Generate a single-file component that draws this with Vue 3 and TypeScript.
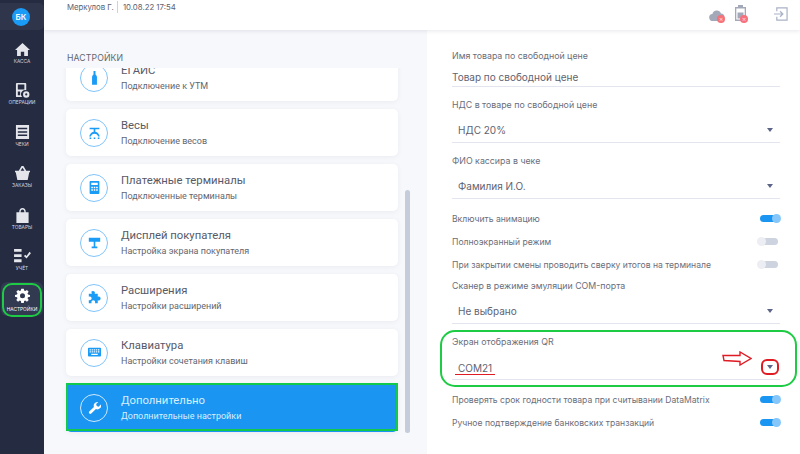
<script setup lang="ts">
interface NavItem { label: string; icon: string }
const nav: NavItem[] = [
  { label: 'КАССА', icon: 'M9 1 1 8.500h2.200V15h4v-4.500h3.600V15h4V8.500H17z' },
  { label: 'ОПЕРАЦИИ', icon: 'M3 0h9a1 1 0 0 1 1 1v6.600A4.500 4.500 0 0 0 8.600 15H3a1 1 0 0 1-1-1V1a1 1 0 0 1 1-1zm1 1.500v5.500h7V1.500zM4 9v4h2.500V9zM13 8.800a3.400 3.400 0 1 0 0 6.800 3.400 3.400 0 0 0 0-6.800zm0 2.200a1.200 1.200 0 1 1 0 2.400 1.200 1.200 0 0 1 0-2.400z' },
  { label: 'ЧЕКИ', icon: 'M2 0h14v15H2zm2 3v1.600h10V3zm0 3.600v1.600h10V6.600zm0 3.600v1.600h10v-1.600z' },
  { label: 'ЗАКАЗЫ', icon: 'M1 5h16v1.600h-.8L14.500 15h-11L1.800 6.600H1zM5 5l3-5h2l3 5h-2L9 1.800 7 5z' },
  { label: 'ТОВАРЫ', icon: 'M2.500 4.500h13V16h-13zM5.500 4.500C5.500 1.500 7 0 9 0s3.500 1.500 3.500 4.500H11C11 2.500 10.200 1.500 9 1.500S7 2.500 7 4.500z' },
  { label: 'УЧЁТ', icon: 'M0 0h8v3H0zm0 5.500h8v3H0zM0 11h8v3H0zm10.500-3.500 1.500-1.500 1.300 1.400L16.500 3 18 4.500 13.300 10z' },
]
const cards = [
  { t: 'ЕГАИС', s: 'Подключение к УТМ', i: 'M6.800 1h2.400v4c0 1 1.800 1.500 1.800 3.500V18H5V8.500C5 6.500 6.800 6 6.800 5z' },
  { t: 'Весы', s: 'Подключение весов', i: 'M2 3h12v2H2zm5 2h2v3c3 .5 5 3 5.500 6h-2C12 12 10.500 10.500 8 10.500S4 12 3.500 14h-2C2 11 4 8.500 7 8zM2 15h2v2H2zm5 0h2v2H7zm5 0h2v2h-2z' },
  { t: 'Платежные терминалы', s: 'Подключенные терминалы', i: 'M3 1h10a1 1 0 0 1 1 1v14a1 1 0 0 1-1 1H3a1 1 0 0 1-1-1V2a1 1 0 0 1 1-1zm1 2v3h8V3zm0 5v2h2V8zm3 0v2h2V8zm3 0v2h2V8zm-6 3v2h2v-2zm3 0v2h2v-2zm3 0v2h2v-2z' },
  { t: 'Дисплей покупателя', s: 'Настройка экрана покупателя', i: 'M1 3h14v5H1zm6 5h2v6h2.500v2h-7v-2H7z' },
  { t: 'Расширения', s: 'Настройки расширений', i: 'M6 1c1.500 0 2.500 1 2.500 2.200 0 .5-.2.8-.3 1.300H12v3.600c.5-.2.800-.3 1.300-.3 1.200 0 2.200 1 2.200 2.400s-1 2.400-2.200 2.400c-.5 0-.8-.1-1.300-.3V16H8.500c.2-.5.300-.8.300-1.300 0-1.200-1-2.200-2.300-2.200s-2.300 1-2.300 2.200c0 .5.1.8.3 1.300H1v-4c.5.200.8.300 1.300.300 1.200 0 2.200-1 2.200-2.300S3.500 7.700 2.300 7.700c-.5 0-.8.100-1.300.300V4.500h3.800c-.1-.5-.3-.8-.3-1.300C3.500 2 4.500 1 6 1z' },
  { t: 'Клавиатура', s: 'Настройки сочетания клавиш', i: 'M1 3h14a1 1 0 0 1 1 1v9a1 1 0 0 1-1 1H1a1 1 0 0 1-1-1V4a1 1 0 0 1 1-1zm1 2v1.500h1.500V5zm2.500 0v1.500H6V5zM7 5v1.500h1.500V5zm2.500 0v1.500H11V5zM12 5v1.500h2V5zM2 7.500V9h1.500V7.500zm2.500 0V9H6V7.500zm2.500 0V9h1.500V7.500zm2.500 0V9H11V7.500zm2.500 0V9h2V7.500zM4 10.500V12h8v-1.500z' },
  { t: 'Дополнительно', s: 'Дополнительные настройки', active: true, i: 'M11.500 1a4.500 4.500 0 0 0-4.200 6L1.500 12.800a1.800 1.800 0 0 0 2.500 2.500L9.800 9.700A4.500 4.500 0 0 0 15.800 4l-2.700 2.700-2.400-.7-.7-2.400L12.700 1a4.500 4.500 0 0 0-1.200 0z' },
]
</script>

<template>
  <div class="app">
    <aside class="side">
      <div class="brand"><span class="avatar">БК</span></div>
      <div v-for="n in nav" :key="n.label" class="nav">
        <svg class="nav-ico" viewBox="0 0 18 16" width="17" height="15"><path :d="n.icon" fill="#e4e6ec" fill-rule="evenodd" /></svg>
        <span>{{ n.label }}</span>
      </div>
      <div class="nav current">
        <svg class="nav-ico" viewBox="0 0 24 24" width="15" height="15"><path fill="#fff" fill-rule="evenodd" d="M10 1h4l.6 3.100 1.900.8L19.100 3l2.800 2.800-1.900 2.700.8 1.900L24 11v3l-3.200.6-.8 1.900 1.900 2.700-2.800 2.800-2.600-1.900-1.900.8L14 24h-4l-.6-3.100-1.900-.8L4.900 22l-2.800-2.800L4 16.500l-.8-1.900L0 14v-3l3.200-.6.8-1.900-1.900-2.700L4.900 3l2.600 1.900 1.900-.8zM12 8.500a4 4 0 1 0 0 8 4 4 0 0 0 0-8z" /></svg>
        <span>НАСТРОЙКИ</span>
      </div>
    </aside>

    <div class="main">
      <header class="top">
        <span class="who">Меркулов Г.</span>
        <span class="when">10.08.22 17:54</span>
        <span class="top-icons">
          <span class="status cloud">
            <svg viewBox="0 0 16 11" width="16" height="11"><path fill="#a3a9b8" d="M4 11a3.500 3.500 0 0 1-.6-7A4.500 4.500 0 0 1 12 3.500 3.800 3.800 0 0 1 12.500 11z" /></svg>
            <i class="dot">×</i>
          </span>
          <span class="status clip">
            <svg viewBox="0 0 11 16" width="11" height="16"><path fill="#a3a9b8" fill-rule="evenodd" d="M3 0h5v2h3v14H0V2h3zM1.300 3.500v11h8.400v-11zM2.500 7.500h6v6h-6z" /></svg>
            <i class="dot">×</i>
          </span>
          <svg class="exit" viewBox="0 0 15 15" width="15" height="15" fill="none" stroke="#aab2c6" stroke-width="1.300"><path d="M3 4.500V1h11v13H3v-3.500M0 7.500h9M6.500 4.500l3 3-3 3" /></svg>
        </span>
      </header>

      <div class="body">
        <section class="left">
          <h2>НАСТРОЙКИ</h2>
          <div class="scroll">
            <div class="list">
              <div v-for="c in cards" :key="c.t" class="card" :class="{ on: c.active }">
                <span class="ring">
                  <svg viewBox="0 0 16 18" width="13" height="15"><path :d="c.i" :fill="c.active ? '#fff' : '#1a9bf5'" fill-rule="evenodd" /></svg>
                </span>
                <span class="txt">
                  <b>{{ c.t }}</b>
                  <small>{{ c.s }}</small>
                </span>
              </div>
            </div>
            <i class="thumb"></i>
          </div>
        </section>

        <section class="right">
          <div class="field first">
            <label>Имя товара по свободной цене</label>
            <div class="val plain">Товар по свободной цене</div>
          </div>
          <div class="field">
            <label>НДС в товаре по свободной цене</label>
            <div class="val">НДС 20%<i class="caret"></i></div>
          </div>
          <div class="field">
            <label>ФИО кассира в чеке</label>
            <div class="val">Фамилия И.О.<i class="caret"></i></div>
          </div>
          <div class="togs">
            <div class="tog"><span>Включить анимацию</span><i class="sw on"></i></div>
            <div class="tog"><span>Полноэкранный режим</span><i class="sw"></i></div>
            <div class="tog"><span>При закрытии смены проводить сверку итогов на терминале</span><i class="sw"></i></div>
          </div>
          <div class="field scan">
            <label>Сканер в режиме эмуляции COM-порта</label>
            <div class="val">Не выбрано<i class="caret"></i></div>
          </div>
          <div class="field">
            <label>Экран отображения QR</label>
            <div class="val short"><span class="com">COM21</span><i class="caret"></i></div>
          </div>
          <div class="togs after">
            <div class="tog"><span>Проверять срок годности товара при считывании DataMatrix</span><i class="sw on"></i></div>
            <div class="tog"><span>Ручное подтверждение банковских транзакций</span><i class="sw on"></i></div>
          </div>
        </section>
      </div>
    </div>

    <i class="mark-nav"></i>
    <i class="mark-card"></i>
    <i class="mark-qr"></i>
    <i class="mark-caret"></i>
    <svg class="arrow" viewBox="0 0 30 15" width="30" height="15"><path d="M1 4.500h17V1l11 6.500-11 6.500v-3.500L2 9.500z" fill="#fff" stroke="#e01b24" stroke-width="1.400" /></svg>
  </div>
</template>

<style>
body { margin: 0; }
</style>

<style scoped>
.app { position: relative; display: flex; width: 800px; height: 454px; overflow: hidden; background: #fff; font-family: "Roboto", sans-serif; color: #4a4e5c; }
.side { flex: 0 0 44px; background: #252b40; display: flex; flex-direction: column; }
.brand { flex: none; height: 27px; margin: 3px 0 7px; background: #2f364c; border-radius: 0 5px 5px 0; display: flex; align-items: center; justify-content: center; padding-right: 2px; }
.avatar { width: 18px; height: 18px; border-radius: 50%; background: #1a9bf5; color: #fff; font: 600 8px/18px "Inter", sans-serif; text-align: center; }
.nav { flex: none; height: 41.4px; display: flex; flex-direction: column; align-items: center; color: #d8dbe3; font: 400 4.800px/7px "Inter", sans-serif; padding-top: 5px; box-sizing: border-box; gap: 1px; }
.nav-ico { flex: none; }
.nav.current { height: 34px; margin: -3px 1px 0; background: #323a52; border-radius: 6px; color: #fff; padding-top: 6px; gap: 3px; }
.main { flex: 1; display: flex; flex-direction: column; min-width: 0; }
.top { height: 30px; flex: none; display: flex; align-items: flex-start; box-shadow: 0 1px 4px rgba(50, 60, 90, .12); position: relative; z-index: 2; background: #fff; font: 400 7.800px/12px "Inter", sans-serif; color: #5d6270; padding: 1px 12px 0 23px; box-sizing: border-box; }
.who { padding-right: 3px; border-right: 1px solid #cfd2da; height: 12px; }
.when { padding-left: 5px; }
.top-icons { margin-left: auto; display: flex; align-items: flex-start; padding-top: 4px; }
.status { position: relative; display: block; height: 16px; }
.status svg { display: block; }
.cloud svg { margin-top: 5px; }
.clip { margin-left: 10px; }
.dot { position: absolute; right: 0; bottom: -2px; width: 8px; height: 8px; border-radius: 50%; background: #f6717a; color: #ffd5d8; font: 400 7px/8px "Inter", sans-serif; text-align: center; }
.clip .dot { right: -2px; }
.exit { margin-left: 28px; margin-top: 2px; width: 14px; height: 14px; }
.body { flex: 1; display: flex; min-height: 0; }
.left { flex: 0 0 383px; background: #f7f8fb; padding: 22px 0 0 23px; box-sizing: border-box; display: flex; flex-direction: column; }
h2 { margin: 0; font: 400 8.700px/12px "Inter", sans-serif; letter-spacing: .1px; color: #62666f; height: 16px; }
.scroll { position: relative; flex: none; height: 368px; overflow: hidden; padding: 0 6px 6px; margin-left: -7px; }
.list { display: flex; flex-direction: column; gap: 8px; margin-top: -14px; }
.card { width: 332px; height: 47px; flex: none; box-sizing: border-box; background: #fff; border-radius: 5px; box-shadow: 0 1px 5px rgba(60, 70, 110, .07); display: flex; align-items: center; padding-left: 14px; }
.ring { width: 28px; height: 28px; box-sizing: border-box; border: 1px solid #7fc4fb; border-radius: 50%; display: flex; align-items: center; justify-content: center; flex: none; }
.txt { margin-left: 13px; display: flex; flex-direction: column; }
.txt b { font-weight: 400; font-size: 11.300px; line-height: 17px; color: #565a68; }
.txt small { font-size: 9px; line-height: 15px; color: #62666f; }
.card.on { background: #1a96f2; height: 48px; }
.card.on .ring { border-color: #cfe8fd; }
.card.on b, .card.on small { color: #d9eefe; }
.thumb { position: absolute; left: 345px; top: 122px; width: 5px; height: 243px; border-radius: 3px; background: #c5ccda; }
.right { flex: 1; padding: 20px 20px 0 25px; box-sizing: border-box; font-family: "Inter", sans-serif; }
label { display: block; font-size: 8.800px; line-height: 12px; color: #6a6e7b; }
.field { margin-top: 12px; }
.field.first { margin-top: 0; }
.val { position: relative; height: 32px; border-bottom: 1px solid #e2e5ee; font-size: 10px; line-height: 14px; color: #5f6370; padding: 12px 0 0 6px; box-sizing: border-box; }
.val.plain { height: 25px; padding: 8px 0 0; }
.caret { position: absolute; right: 7px; top: 17px; border: 3.500px solid transparent; border-top: 4px solid #5c6488; border-bottom: 0; }
.togs { margin-top: 8px; }
.tog { display: flex; justify-content: space-between; align-items: center; height: 23px; font-size: 8.600px; color: #6a6e7b; }
.sw { position: relative; width: 20px; height: 7px; border-radius: 4px; background: #cdd3df; margin-right: 2px; }
.sw::after { content: ""; position: absolute; left: -1px; top: -1px; width: 9px; height: 9px; border-radius: 50%; background: #eceef3; }
.sw.on { background: #1a96f2; margin-right: 0; }
.sw.on::after { left: auto; right: -1px; background: #85c6fb; }
.scan { margin-top: 4px; }
.short { padding-top: 13px; }
.com { display: inline-block; border-bottom: 1px solid #e01b24; line-height: 11px; margin-left: -3px; padding: 0 3px; }
.mark-nav { position: absolute; left: 2px; top: 283px; width: 40px; height: 34px; border: 2px solid #1ecb44; border-radius: 10px; box-sizing: border-box; }
.mark-card { position: absolute; left: 66px; top: 383px; width: 332px; height: 48px; border: 2px solid #12c94e; box-sizing: border-box; }
.mark-qr { position: absolute; left: 440px; top: 330px; width: 357px; height: 57px; border: 2px solid #1ecb44; border-radius: 15px; box-sizing: border-box; }
.mark-caret { position: absolute; left: 761px; top: 359px; width: 18px; height: 16px; border: 2px solid #e01b24; border-radius: 6px; box-sizing: border-box; }
.arrow { position: absolute; left: 722px; top: 351px; }
</style>
